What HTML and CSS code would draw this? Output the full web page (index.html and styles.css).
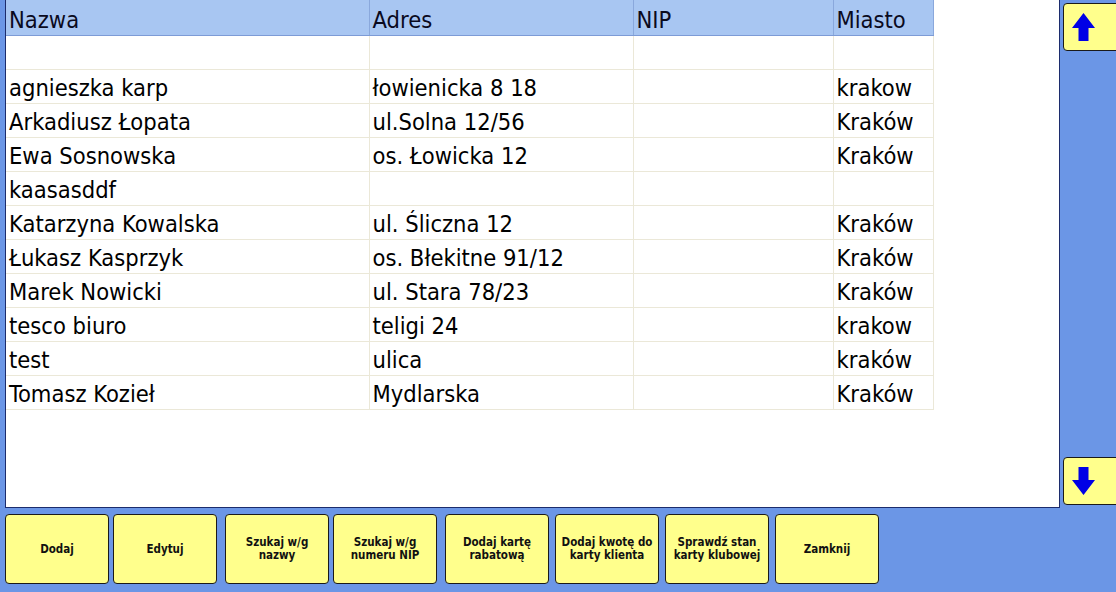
FILE: index.html
```html
<!DOCTYPE html>
<html lang="pl">
<head>
<meta charset="utf-8">
<title>Klienci</title>
<link rel="stylesheet" href="styles.css">
</head>
<body>
<div class="app">
  <div class="top">
    <div class="panel">
      <table class="grid">
        <colgroup>
          <col class="c-name"><col class="c-addr"><col class="c-nip"><col class="c-city">
        </colgroup>
        <thead>
          <tr><th>Nazwa</th><th>Adres</th><th>NIP</th><th>Miasto</th></tr>
        </thead>
        <tbody>
          <tr><td></td><td></td><td></td><td></td></tr>
          <tr><td>agnieszka karp</td><td>łowienicka 8 18</td><td></td><td>krakow</td></tr>
          <tr><td>Arkadiusz Łopata</td><td>ul.Solna 12/56</td><td></td><td>Kraków</td></tr>
          <tr><td>Ewa Sosnowska</td><td>os. Łowicka 12</td><td></td><td>Kraków</td></tr>
          <tr><td>kaasasddf</td><td></td><td></td><td></td></tr>
          <tr><td>Katarzyna Kowalska</td><td>ul. Śliczna 12</td><td></td><td>Kraków</td></tr>
          <tr><td>Łukasz Kasprzyk</td><td>os. Błekitne 91/12</td><td></td><td>Kraków</td></tr>
          <tr><td>Marek Nowicki</td><td>ul. Stara 78/23</td><td></td><td>Kraków</td></tr>
          <tr><td>tesco biuro</td><td>teligi 24</td><td></td><td>krakow</td></tr>
          <tr><td>test</td><td>ulica</td><td></td><td>kraków</td></tr>
          <tr><td>Tomasz Kozieł</td><td>Mydlarska</td><td></td><td>Kraków</td></tr>
        </tbody>
      </table>
    </div>
    <div class="side">
      <button class="arrow-btn" aria-label="W górę">
        <svg width="23" height="28" viewBox="0 0 23 28"><path d="M11.5 0 L23 15 L16.5 15 L16.5 28 L6.5 28 L6.5 15 L0 15 Z" fill="#0000e6"/></svg>
      </button>
      <button class="arrow-btn" aria-label="W dół">
        <svg width="23" height="28" viewBox="0 0 23 28"><path d="M11.5 28 L23 13 L16.5 13 L16.5 0 L6.5 0 L6.5 13 L0 13 Z" fill="#0000e6"/></svg>
      </button>
    </div>
  </div>
  <div class="toolbar">
    <button class="btn">Dodaj</button>
    <button class="btn">Edytuj</button>
    <button class="btn gap-l">Szukaj w/g<br>nazwy</button>
    <button class="btn">Szukaj w/g<br>numeru NIP</button>
    <button class="btn gap-l">Dodaj kartę<br>rabatową</button>
    <button class="btn gap-s">Dodaj kwotę do<br>karty klienta</button>
    <button class="btn gap-s">Sprawdź stan<br>karty klubowej</button>
    <button class="btn gap-s">Zamknij</button>
  </div>
</div>
</body>
</html>
```
FILE: styles.css
```css
html, body {
  margin: 0;
  padding: 0;
}
body {
  background: #6b96e6;
  width: 1116px;
  height: 592px;
  overflow: hidden;
  font-family: "DejaVu Sans Condensed", "DejaVu Sans", sans-serif;
}
.app {
  display: flex;
  flex-direction: column;
}
.top {
  display: flex;
  height: 508px;
}
.panel {
  flex: 0 0 auto;
  margin-left: 5px;
  width: 1053px;
  height: 507px;
  background: #ffffff;
  border: 1px solid #1c2c6c;
  border-top: none;
  box-sizing: content-box;
}
.grid {
  border-collapse: collapse;
  table-layout: fixed;
  width: 927px;
  font-size: 23.5px;
  color: #000;
}
.c-name { width: 363px; }
.c-addr { width: 264px; }
.c-nip { width: 200px; }
.c-city { width: 100px; }
.grid th {
  height: 35px;
  padding: 6px 0 0 3px;
  text-align: left;
  font-weight: normal;
  background: #a8c6f2;
  color: #0a0a1e;
  border-right: 1px solid #8aa8dc;
  border-bottom: 1px solid #7d9bd6;
  box-sizing: border-box;
  vertical-align: middle;
}
.grid td {
  height: 34px;
  padding: 3px 0 0 3px;
  border-right: 1px solid #ebe8d8;
  border-bottom: 1px solid #ebe8d8;
  box-sizing: border-box;
  white-space: nowrap;
  overflow: hidden;
  vertical-align: middle;
}
.side {
  flex: 1 1 auto;
  min-width: 0;
  display: flex;
  flex-direction: column;
  justify-content: space-between;
  align-items: flex-start;
  padding: 3px 0 3px 3px;
}
.arrow-btn {
  flex: 0 0 auto;
  width: 60px;
  height: 48px;
  background: #ffff8c;
  border: 1px solid #1a1a1a;
  border-radius: 4px;
  padding: 0 0 0 8px;
  display: flex;
  align-items: center;
  justify-content: flex-start;
}
.toolbar {
  display: flex;
  gap: 4px;
  margin-top: 6px;
  padding-left: 5px;
}
.btn {
  flex: 0 0 auto;
  width: 104px;
  height: 70px;
  background: #ffff8c;
  border: 1px solid #1a1a1a;
  border-radius: 4px;
  padding: 0;
  font-family: "DejaVu Sans Condensed", "DejaVu Sans", sans-serif;
  font-weight: bold;
  font-size: 11.5px;
  line-height: 13px;
  color: #111;
  text-align: center;
}
.btn.gap-l { margin-left: 4px; }
.btn.gap-s { margin-left: 2px; }
```
